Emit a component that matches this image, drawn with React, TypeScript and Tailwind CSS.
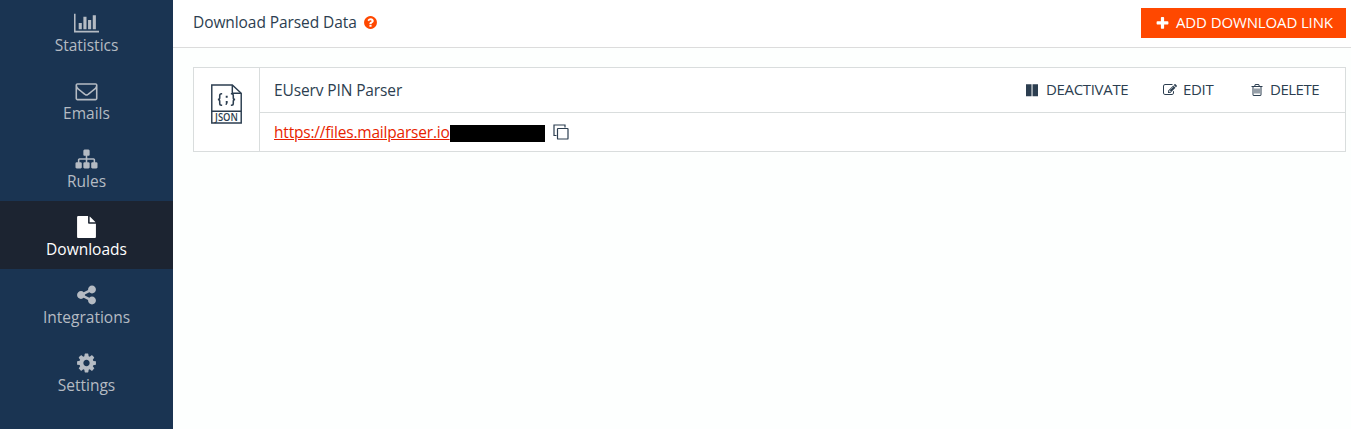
import React from "react";

const paths = {
  chart:
    "M640 896v512h-256v-512h256zm384-512v1024h-256v-1024h256zm1024 1152v128h-2048v-1536h128v1408h1920zm-640-896v768h-256v-768h256zm384-384v1152h-256v-1152h256z",
  envelope:
    "M1664 1504v-768q-32 36-69 66-268 206-426 338-51 43-83 67t-86.5 48.5-102.5 24.5h-2q-48 0-102.5-24.5t-86.5-48.5-83-67q-158-132-426-338-37-30-69-66v768q0 13 9.5 22.5t22.5 9.5h1472q13 0 22.5-9.5t9.5-22.5zm0-1051v-24.5l-.5-13-3-12.5-5.5-9-9-7.5-14-2.5h-1472q-13 0-22.5 9.5t-9.5 22.5q0 168 147 284 193 152 401 317 6 5 35 29.5t46 37.5 44.5 31.5 50.5 27.5 43 9h2q20 0 43-9t50.5-27.5 44.5-31.5 46-37.5 35-29.5q208-165 401-317 54-43 100.5-115.5t46.5-131.5zm128-37v1088q0 66-47 113t-113 47h-1472q-66 0-113-47t-47-113v-1088q0-66 47-113t113-47h1472q66 0 113 47t47 113z",
  sitemap:
    "M1792 1248v320q0 40-28 68t-68 28h-320q-40 0-68-28t-28-68v-320q0-40 28-68t68-28h96v-192h-512v192h96q40 0 68 28t28 68v320q0 40-28 68t-68 28h-320q-40 0-68-28t-28-68v-320q0-40 28-68t68-28h96v-192h-512v192h96q40 0 68 28t28 68v320q0 40-28 68t-68 28h-320q-40 0-68-28t-28-68v-320q0-40 28-68t68-28h96v-192q0-52 38-90t90-38h512v-192h-96q-40 0-68-28t-28-68v-320q0-40 28-68t68-28h320q40 0 68 28t28 68v320q0 40-28 68t-68 28h-96v192h512q52 0 90 38t38 90v192h96q40 0 68 28t28 68z",
  file:
    "M1152 512v-472q22 14 36 28l408 408q14 14 28 36h-472zm-128 32q0 40 28 68t68 28h544v1056q0 40-28 68t-68 28h-1344q-40 0-68-28t-28-68v-1600q0-40 28-68t68-28h800v544z",
  share:
    "M1344 1024q133 0 226.5 93.5t93.5 226.5-93.5 226.5-226.5 93.5-226.5-93.5-93.5-226.5q0-12 2-34l-360-180q-92 86-218 86-133 0-226.5-93.5t-93.5-226.5 93.5-226.5 226.5-93.5q126 0 218 86l360-180q-2-22-2-34 0-133 93.5-226.5t226.5-93.5 226.5 93.5 93.5 226.5-93.5 226.5-226.5 93.5q-126 0-218-86l-360 180q2 22 2 34t-2 34l360 180q92-86 218-86z",
  cog:
    "M1152 896q0-106-75-181t-181-75-181 75-75 181 75 181 181 75 181-75 75-181zm512-109v222q0 12-8 23t-20 13l-185 28q-19 54-39 91 35 50 107 138 10 12 10 25t-9 23q-27 37-99 108t-94 71q-12 0-26-9l-138-108q-44 23-91 38-16 136-29 186-7 28-36 28h-222q-14 0-24.5-8.5t-11.5-21.5l-28-184q-49-16-90-37l-141 107q-10 9-25 9-14 0-25-11-126-114-165-168-7-10-7-23 0-12 8-23 15-21 51-66.5t54-70.5q-27-50-41-99l-183-27q-13-2-21-12.5t-8-23.5v-222q0-12 8-23t19-13l186-28q14-46 39-92-40-57-107-138-10-12-10-24 0-10 9-23 26-36 98.5-107.5t94.5-71.5q13 0 26 10l138 107q44-23 91-38 16-136 29-186 7-28 36-28h222q14 0 24.5 8.5t11.5 21.5l28 184q49 16 90 37l142-107q9-9 24-9 13 0 25 10 129 119 165 170 7 8 7 22 0 12-8 23-15 21-51 66.5t-54 70.5q26 50 41 98l183 28q13 2 21 12.5t8 23.5z",
  question:
    "M1024 1376v-192q0-14-9-23t-23-9h-192q-14 0-23 9t-9 23v192q0 14 9 23t23 9h192q14 0 23-9t9-23zm256-672q0-88-55.5-163t-138.5-116-170-41q-243 0-371 213-15 24 8 42l132 100q7 6 19 6 16 0 25-12 53-68 86-92 34-24 86-24 48 0 85.5 26t37.5 59q0 38-20 61t-68 45q-63 28-115.5 86.5t-52.5 125.5v36q0 14 9 23t23 9h192q14 0 23-9t9-23q0-19 21.5-49.5t54.5-49.5q32-18 49-28.5t46-35 44.5-48 28-60.5 12.5-81zm384 192q0 209-103 385.5t-279.5 279.5-385.5 103-385.5-103-279.5-279.5-103-385.5 103-385.5 279.5-279.5 385.5-103 385.5 103 279.5 279.5 103 385.5z",
  plus:
    "M1600 736v192q0 40-28 68t-68 28h-416v416q0 40-28 68t-68 28h-192q-40 0-68-28t-28-68v-416h-416q-40 0-68-28t-28-68v-192q0-40 28-68t68-28h416v-416q0-40 28-68t68-28h192q40 0 68 28t28 68v416h416q40 0 68 28t28 68z",
  edit:
    "M888 1184l116-116-152-152-116 116v56h96v96h56zm440-720q-16-16-33 1l-350 350q-17 17-1 33t33-1l350-350q17-17 1-33zm80 594v190q0 119-84.5 203.5t-203.5 84.5h-832q-119 0-203.5-84.5t-84.5-203.5v-832q0-119 84.5-203.5t203.5-84.5h832q63 0 117 25 15 7 18 23 3 17-9 29l-49 49q-14 14-32 8-23-6-45-6h-832q-66 0-113 47t-47 113v832q0 66 47 113t113 47h832q66 0 113-47t47-113v-126q0-13 9-22l64-64q15-15 35-7t20 29zm-96-738l288 288-672 672h-288v-288zm444 132l-92 92-288-288 92-92q28-28 68-28t68 28l152 152q28 28 28 68t-28 68z",
  trash:
    "M704 736v576q0 14-9 23t-23 9h-64q-14 0-23-9t-9-23v-576q0-14 9-23t23-9h64q14 0 23 9t9 23zm256 0v576q0 14-9 23t-23 9h-64q-14 0-23-9t-9-23v-576q0-14 9-23t23-9h64q14 0 23 9t9 23zm256 0v576q0 14-9 23t-23 9h-64q-14 0-23-9t-9-23v-576q0-14 9-23t23-9h64q14 0 23 9t9 23zm128 724v-948h-896v948q0 22 7 40.5t14.5 27 10.5 8.5h832q3 0 10.5-8.5t14.5-27 7-40.5zm-672-1076h448l-48-117q-7-9-17-11h-317q-10 2-17 11zm928 32v64q0 14-9 23t-23 9h-96v948q0 83-47 143.5t-113 60.5h-832q-66 0-113-58.5t-47-141.5v-952h-96q-14 0-23-9t-9-23v-64q0-14 9-23t23-9h309l70-167q15-37 54-63t79-26h320q40 0 79 26t54 63l70 167h309q14 0 23 9t9 23z",
  pause: "M1664 160v1536h-700v-1536h700zm-828 0v1536h-708v-1536h708z",
};

function Icon({ name, className, width = 1792 }: { name: keyof typeof paths; className: string; width?: number }) {
  return (
    <svg viewBox={`0 0 ${width} 1792`} fill="currentColor" className={`shrink-0 ${className}`} aria-hidden="true">
      <path d={paths[name]} />
    </svg>
  );
}

const nav: { label: string; icon: keyof typeof paths; width?: number; active?: boolean }[] = [
  { label: "Statistics", icon: "chart", width: 2048 },
  { label: "Emails", icon: "envelope" },
  { label: "Rules", icon: "sitemap" },
  { label: "Downloads", icon: "file", active: true },
  { label: "Integrations", icon: "share" },
  { label: "Settings", icon: "cog" },
];

function JsonFile() {
  return (
    <svg viewBox="0 0 32 41" className="h-10 w-[31px]" fill="none" stroke="#2c3e50" strokeWidth="1.5">
      <path d="M.8.800h21.200l9.200 8.700v30.700h-30.400z" />
      <path d="M22 1v8.500h9M1 28h30" />
      <path
        strokeWidth="1.6"
        d="M11.500 10h-.7q-1.800 0-1.800 1.800v2.200q0 1.900-1.900 1.900q1.900 0 1.900 1.900v2.200q0 1.800 1.800 1.800h.7M20.500 10h.7q1.800 0 1.800 1.800v2.200q0 1.900 1.900 1.900q-1.900 0-1.900 1.900v2.200q0 1.800-1.800 1.800h-.7"
      />
      <path d="M15.200 12h2v2h-2zM15.200 17.500h2v2l-1.200 2h-1l.3-2z" fill="#2c3e50" stroke="none" />
      <text
        x="4.200"
        y="38"
        fill="#2c3e50"
        stroke="none"
        textLength="23.500"
        lengthAdjust="spacingAndGlyphs"
        className="font-['Open_Sans',sans-serif] text-[10.5px] font-semibold"
      >
        JSON
      </text>
    </svg>
  );
}

export default function App() {
  return (
    <div className="flex h-[429px] w-full overflow-hidden bg-[#fdfffe] font-['Open_Sans','Noto_Sans',sans-serif] text-[15.5px] text-[#2c3e50]">
      <aside className="w-[173px] shrink-0 bg-[#1a3452]">
        <nav className="-mt-[3px]">
          {nav.map((item) => (
            <a
              key={item.label}
              className={`flex h-[68px] flex-col items-center pt-[15px] ${
                item.active ? "bg-[#1c2431] text-white" : "text-[#b5bbc3]"
              }`}
            >
              <Icon
                name={item.icon}
                width={item.width}
                className={item.width ? "h-[22px] w-[25px]" : "h-[22px] w-[23px]"}
              />
              <span className="leading-[22px]">{item.label}</span>
            </a>
          ))}
        </nav>
      </aside>
      <main className="min-w-0 flex-1">
        <header className="flex h-12 items-start justify-between border-b border-[#dcdcdc] bg-white pr-[5px] pl-5">
          <div className="flex h-[45px] items-center">
            <h1 className="w-[164px] tracking-[-0.08px] whitespace-nowrap">Download Parsed Data</h1>
            <Icon name="question" className="ml-1.5 size-[15px] text-[#ff4800]" />
          </div>
          <button className="mt-2 flex h-[30px] w-[205px] items-center bg-[#ff4800] pl-3.5 text-[15px] text-white">
            <Icon name="plus" className="mr-1.5 size-[15px]" />
            <span className="-mt-0.5 tracking-[-0.13px] whitespace-nowrap">ADD DOWNLOAD LINK</span>
          </button>
        </header>
        <section className="mt-[19px] mr-[5px] ml-5 flex h-[85px] border border-[#d9dddd] bg-white">
          <div className="flex w-[66px] shrink-0 justify-center border-r border-[#d9dddd] pt-4">
            <JsonFile />
          </div>
          <div className="min-w-0 flex-1">
            <div className="flex h-[45px] items-center justify-between border-b border-[#d9dddd] pr-[26px] pl-3.5">
              <h2 className="pt-0.5 tracking-[-0.12px]">EUserv PIN Parser</h2>
              <div className="flex items-center text-[15px]">
                <a className="flex w-[103px] items-center">
                  <Icon name="pause" className="mr-[7px] size-[14px]" />
                  <span className="-mt-0.5 tracking-[-0.33px]">DEACTIVATE</span>
                </a>
                <a className="ml-[35px] flex w-[51px] items-center">
                  <Icon name="edit" className="mr-1.5 size-[14px]" />
                  <span className="-mt-0.5 tracking-[-0.3px]">EDIT</span>
                </a>
                <a className="ml-9 flex w-[69px] items-center">
                  <Icon name="trash" className="mr-1.5 size-[14px]" />
                  <span className="-mt-0.5 tracking-[-0.5px]">DELETE</span>
                </a>
              </div>
            </div>
            <div className="flex h-[38px] items-center pl-3.5">
              <a className="w-44 shrink-0 pt-0.5 tracking-[-0.2px] whitespace-nowrap text-[#e81e00] underline underline-offset-1">
                https://files.mailparser.io
              </a>
              <div className="mt-0.5 h-[17px] w-[95px] bg-black" />
              <svg viewBox="0 0 16 16" className="ml-2 size-4" fill="none" stroke="#2c3e50" strokeWidth="1.2">
                <path d="M3.500 11.500h-2.500v-10.500h11v2.500" />
                <rect x="4.500" y="4.500" width="10.500" height="10.500" rx="0.600" />
              </svg>
            </div>
          </div>
        </section>
      </main>
    </div>
  );
}
